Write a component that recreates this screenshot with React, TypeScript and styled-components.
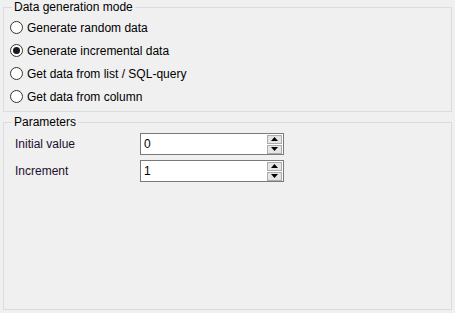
import React from "react";
import styled, { createGlobalStyle } from "styled-components";

const GlobalStyle = createGlobalStyle`
  html, body {
    margin: 0;
    padding: 0;
    background: #f0f0f0;
    font-family: "Liberation Sans", Arial, sans-serif;
    font-size: 12px;
    color: #000;
  }
`;

const Page = styled.div`
  width: 455px;
  height: 313px;
  display: flex;
  flex-direction: column;
  box-sizing: border-box;
  padding: 0 3px 3px;
  gap: 3px;
`;

const Group = styled.fieldset<{ $grow?: boolean }>`
  margin: 0;
  padding: 0;
  border: 1px solid #dcdcdc;
  min-width: 0;
  flex: ${(p) => (p.$grow ? "1" : "none")};
  display: flex;
  flex-direction: column;
`;

const Legend = styled.legend`
  margin-left: 8px;
  padding: 0 2px;
  line-height: 14px;
  height: 14px;
`;

const RadioList = styled.div`
  display: flex;
  flex-direction: column;
  padding: 2px 0 3px;
`;

const RadioRow = styled.label`
  display: flex;
  align-items: center;
  height: 23px;
  padding-left: 6px;
  gap: 4px;
`;

const Circle = styled.span<{ $checked?: boolean }>`
  width: 11px;
  height: 11px;
  border: 1px solid #333;
  border-radius: 50%;
  background: #fff;
  display: flex;
  align-items: center;
  justify-content: center;
  &::after {
    content: "";
    display: ${(p) => (p.$checked ? "block" : "none")};
    width: 7px;
    height: 7px;
    border-radius: 50%;
    background: #1a1a1a;
  }
`;

const ParamGrid = styled.div`
  display: grid;
  grid-template-columns: 125px 144px;
  row-gap: 5px;
  padding: 4px 0 0 11px;
  align-items: center;
`;

const ParamLabel = styled.span`
  color: #1c0f2e;
`;

const Spin = styled.div`
  height: 22px;
  box-sizing: border-box;
  border: 1px solid #7a7a7a;
  background: #fff;
  display: flex;
  align-items: center;
  padding: 1px 1px 1px 3px;
`;

const Value = styled.span`
  flex: 1;
`;

const Arrows = styled.div`
  display: flex;
  flex-direction: column;
  gap: 1px;
`;

const ArrowBtn = styled.div`
  width: 15px;
  height: 9px;
  box-sizing: border-box;
  border: 1px solid #adadad;
  background: #e5e5e5;
  display: flex;
  align-items: center;
  justify-content: center;
`;

function Arrow({ up }: { up?: boolean }) {
  return (
    <ArrowBtn>
      <svg width="7" height="4" viewBox="0 0 7 4">
        <polygon points={up ? "0,4 7,4 3.5,0" : "0,0 7,0 3.5,4"} fill="#000" />
      </svg>
    </ArrowBtn>
  );
}

function SpinEdit({ value }: { value: string }) {
  return (
    <Spin>
      <Value>{value}</Value>
      <Arrows>
        <Arrow up />
        <Arrow />
      </Arrows>
    </Spin>
  );
}

const modes = [
  "Generate random data",
  "Generate incremental data",
  "Get data from list / SQL-query",
  "Get data from column",
];

export default function App() {
  return (
    <Page>
      <GlobalStyle />
      <Group>
        <Legend>Data generation mode</Legend>
        <RadioList>
          {modes.map((m, i) => (
            <RadioRow key={m}>
              <Circle $checked={i === 1} />
              {m}
            </RadioRow>
          ))}
        </RadioList>
      </Group>
      <Group $grow>
        <Legend>Parameters</Legend>
        <ParamGrid>
          <ParamLabel>Initial value</ParamLabel>
          <SpinEdit value="0" />
          <ParamLabel>Increment</ParamLabel>
          <SpinEdit value="1" />
        </ParamGrid>
      </Group>
    </Page>
  );
}
